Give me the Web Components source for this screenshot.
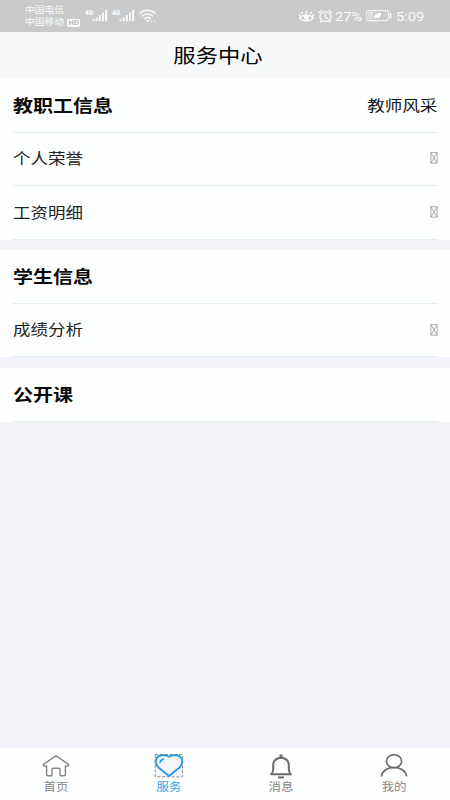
<!DOCTYPE html>
<html lang="zh-CN">
<head>
<meta charset="utf-8">
<title>服务中心</title>
<style>
html,body{margin:0;height:100%}
body{font-family:"Noto Sans CJK SC","Noto Sans",sans-serif;background:#f3f4f9;color:#111;overflow:hidden}
</style>
</head>
<body>
<service-app></service-app>
<script>
const define = (name, html) => {
  const t = document.createElement('template');
  t.innerHTML = html;
  customElements.define(name, class extends HTMLElement {
    constructor() {
      super();
      this.attachShadow({mode: 'open'}).append(t.content.cloneNode(true));
    }
  });
};

define('wide-text', `<style>
:host{display:block;white-space:nowrap;line-height:1;transform:scaleX(var(--sx,1.14));transform-origin:var(--origin,left) center}
</style><slot></slot>`);

define('signal-bars', `<style>
:host{display:block;width:24px;height:16px}svg{display:block}
text{font:bold 7px "Roboto",sans-serif;fill:#fff}
</style>
<svg width="24" height="16" fill="#fafafa"><text x="0" y="6.5" textLength="8" lengthAdjust="spacingAndGlyphs">4G</text>
<rect x="7.5" y="11.2" width="1.9" height="2"/><rect x="10.7" y="9.4" width="1.9" height="3.8"/><rect x="13.9" y="7" width="1.9" height="6.2"/><rect x="17" y="4.6" width="1.9" height="8.6"/><rect x="20.2" y="2" width="1.9" height="11.2"/></svg>`);

define('status-bar', `<style>
:host{display:flex;height:32px;box-sizing:border-box;background:#c9cacb;color:#fafafa;align-items:center;padding:0 25px 0 25px}
.carrier{width:60px;font-size:8.8px;--sx:1.11;display:grid;gap:3px;padding-top:1.5px}
.line{display:flex;align-items:center;gap:7px}
.hd{width:13px;height:8px;border-radius:2px;background:#fafafa;color:#b9babb;font:bold 7.5px/8px Roboto,sans-serif;text-align:center}
signal-bars{margin-right:3px}
svg{display:block}
.right{margin-left:auto;display:flex;align-items:center;height:32px}
.num{font-family:Roboto,sans-serif;font-size:13.5px;margin-top:1px}
</style>
<div class="carrier"><wide-text>中国电信</wide-text><div class="line"><wide-text>中国移动</wide-text><span class="hd">HD</span></div></div>
<signal-bars></signal-bars><signal-bars></signal-bars>
<svg width="18" height="14" fill="none" stroke="#fafafa" stroke-width="1.5" stroke-linecap="round"><path d="M1 4.2C5 .4 12 .4 16 4.2M3.4 7c3-2.8 7.3-2.8 10.2 0M5.8 9.7c1.5-1.5 4-1.5 5.4 0"/><path d="M7.5 11.8 8.5 13l1-1.2z" fill="#fafafa" stroke-width=".7"/><path d="M12 12h.1M15 12h.1"/></svg>
<div class="right">
<svg width="17" height="14" fill="none" stroke="#fafafa" stroke-width="1.4" stroke-linecap="round"><path d="M1.6 8.8C4.5 5.3 12.2 5.3 15.1 8.8 12.5 12.7 4.2 12.7 1.6 8.8z"/><circle cx="8.4" cy="8.4" r="1.9" fill="#fafafa"/><path d="M8.4 2v3.5M3.6 3.5l.8 1.2M13.2 3.5l-.8 1.2M1.1 5.8l.8.8M15.7 5.8l-.8.8"/></svg>
<svg style="margin:0 2px 0 3px" width="15" height="14" fill="none" stroke="#fafafa" stroke-width="1.3" stroke-linecap="round"><ellipse cx="7.4" cy="7.6" rx="5.5" ry="4.8"/><path d="M7.2 5v3l2.3 1.5M1 3.6 3.8 1.4M13.8 3.6 11 1.4M3.6 12l-1 1M11.2 12l1 1"/></svg>
<wide-text class="num" style="--sx:1.08;width:31px">27%</wide-text>
<svg width="26" height="12"><rect x=".6" y=".6" width="21.8" height="10" rx="2" fill="none" stroke="#f1f1f1" stroke-width="1.1"/><rect x="2" y="2" width="5.5" height="7.2" fill="#dedede"/><path d="M8.6 8.6C8 4.8 10 3 15.3 3 15 6.8 12.8 8.8 10 7.8l-1 1z" fill="#fff"/><rect x="23.8" y="3" width="1.5" height="5.5" fill="#fff"/></svg>
<wide-text class="num" style="--sx:1.09;width:29px;margin-left:4px">5:09</wide-text>
</div>`);

define('title-bar', `<style>
:host{display:flex;height:47px;box-sizing:border-box;padding:0 14px 3px 0;background:#f7f8fa;align-items:center;justify-content:center;font-size:19px;color:#000;--origin:center;--sx:1.175}
</style><wide-text><slot></slot></wide-text>`);

define('info-card', `<style>
:host{display:block;background:#fdfefe;padding:0 12.5px;margin-bottom:10.5px}
header{display:flex;justify-content:space-between;align-items:center;height:53.6px;box-sizing:border-box;border-bottom:1px solid #e9eced;padding-bottom:2px}
.title{font-size:17.2px;font-weight:700;--sx:1.163;color:#0a0a0a}
.extra{font-size:15.3px;--origin:right;--sx:1.144;color:#111}
</style><header><wide-text class="title"><slot name="title"></slot></wide-text><wide-text class="extra"><slot name="extra"></slot></wide-text></header><slot></slot>`);

define('info-row', `<style>
:host{display:flex;height:53.6px;box-sizing:border-box;border-bottom:1px solid #e9eced;justify-content:space-between;align-items:center;font-size:15.3px;--sx:1.144;color:#222;padding-bottom:2.5px}
svg{display:block;margin-top:1.5px}
</style><wide-text><slot></slot></wide-text>
<svg width="8" height="12" fill="none" stroke="#969696" stroke-width=".8"><path d="M.9.7h6.2v10.4H.9zM.9.7l6.2 10.4M7.1.7.9 11.1"/></svg>`);

define('tab-item', `<style>
:host{display:flex;flex-direction:column;align-items:center;padding-top:5px;font-size:11px;color:#888;--origin:center;--sx:1.13}
wide-text{margin-top:2px}
</style><slot name="icon"></slot><wide-text><slot></slot></wide-text>`);

define('tab-bar', `<style>
:host{display:grid;grid-template-columns:repeat(4,1fr);height:52px;background:#fdfefe;margin-top:auto}
svg{display:block}
.on{color:#2f9fe3}
</style>
<tab-item><svg slot="icon" width="30" height="26" fill="none" stroke="#858585" stroke-width="1.4" stroke-linejoin="round"><path d="M15 2.8 2.4 11.3Q1.8 13 3.5 13H5.6V21.3Q5.6 22.8 7 22.8H11V16.5Q11 15.2 12.3 15.2H17.7Q19 15.2 19 16.5V22.8H23Q24.4 22.8 24.4 21.3V13H26.5Q28.2 13 27.6 11.3z"/></svg>首页</tab-item>
<tab-item class="on"><svg slot="icon" width="30" height="26" fill="none"><rect x="1.2" y="1.5" width="27.4" height="22.3" fill="#f5f6f8" stroke="#8b8b8b" stroke-width="1" stroke-dasharray="3 1.8"/><path d="M15 23 4.2 14.2C-.3 9.5 2 2.3 8.3 2.3H10.2Q12.8 2.3 15 3.7 17.2 2.3 19.8 2.3H21.7C28 2.3 30.3 9.5 25.8 14.2z" stroke="#259be4" stroke-width="1.9" stroke-linejoin="round"/><path d="M6.2 9.2Q6.5 7.2 9.2 6.2" stroke="#259be4" stroke-width="1.8" stroke-linecap="round"/></svg>服务</tab-item>
<tab-item><svg slot="icon" width="30" height="26" fill="none" stroke="#6a6a6a" stroke-width="2" stroke-linejoin="round"><path d="M5.2 21.2Q7.2 19.5 7.2 16V12.2C7.2 2.3 22.8 2.3 22.8 12.2V16Q22.8 19.5 24.8 21.2z"/><path d="M15 1.5v3" stroke-width="3"/><path d="M12 24.4h6"/></svg>消息</tab-item>
<tab-item><svg slot="icon" width="30" height="26" fill="none" stroke="#686868" stroke-width="1.6" stroke-linecap="round"><ellipse cx="15" cy="8.2" rx="7.6" ry="6.5"/><path d="M2.5 22.8C4.8 11.7 25.2 11.7 27.5 22.8"/></svg>我的</tab-item>`);

define('service-app', `<style>:host{display:flex;flex-direction:column;height:800px}</style>
<status-bar></status-bar>
<title-bar>服务中心</title-bar>
<info-card><span slot="title">教职工信息</span><span slot="extra">教师风采</span>
<info-row>个人荣誉</info-row><info-row>工资明细</info-row></info-card>
<info-card><span slot="title">学生信息</span><info-row>成绩分析</info-row></info-card>
<info-card><span slot="title">公开课</span></info-card>
<tab-bar></tab-bar>`);
</script>
</body>
</html>
